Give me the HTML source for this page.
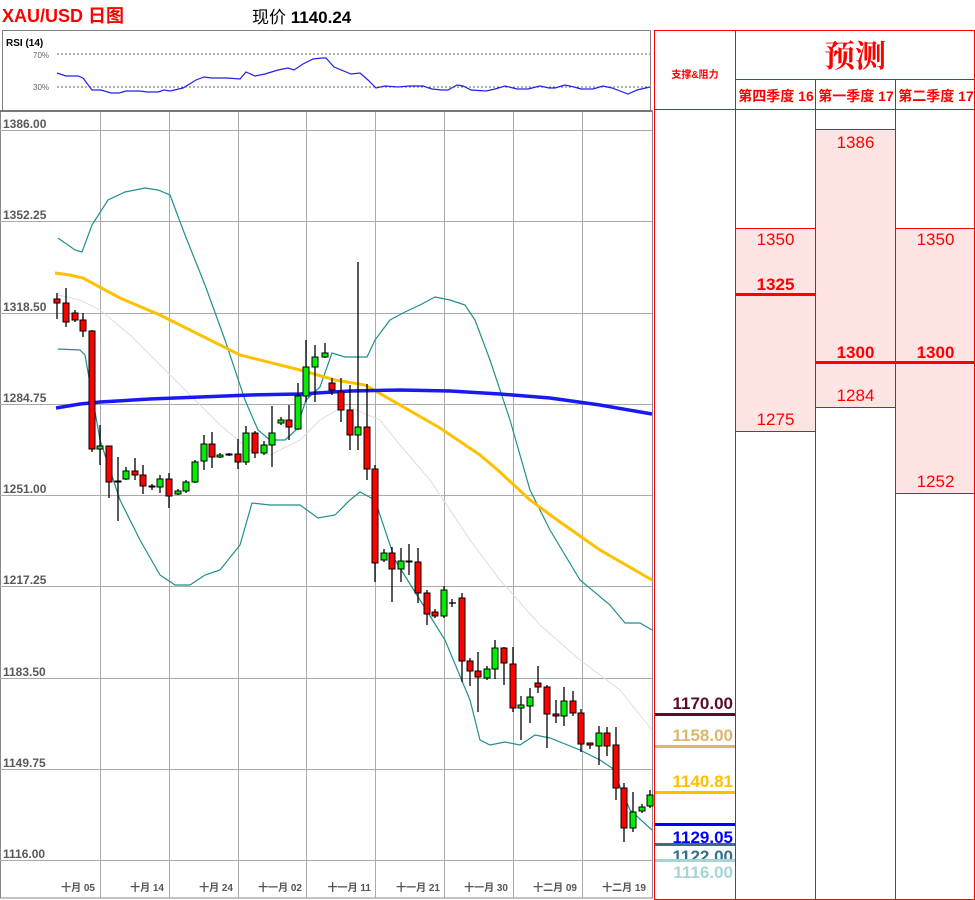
<!DOCTYPE html>
<html><head><meta charset="utf-8"><style>
body{margin:0;width:975px;height:900px;background:#fff;position:relative;overflow:hidden;font-family:"Liberation Sans","Noto Sans CJK SC",sans-serif}
.a{position:absolute}
.t{position:absolute;color:#f00;text-align:center;font-size:17px;line-height:18px}
.b{font-weight:bold}
.lv{position:absolute;left:655px;width:78px;text-align:right;font-weight:bold;font-size:17px;line-height:18px}
.ln{position:absolute;left:655px;width:80px;height:3px}
</style></head><body>
<div class="a" style="left:2px;top:2px;color:#f00;font-weight:bold;font-size:18px;">XAU/USD 日图</div>
<div class="a" style="left:252px;top:3px;color:#000;font-size:17px;">现价 <b>1140.24</b></div>

<svg class="a" style="left:0;top:0" width="654" height="900" font-family="Liberation Sans, sans-serif">
<rect x="2.5" y="30.5" width="648" height="80" fill="none" stroke="#808080"/>
<text x="6" y="46" font-size="10" font-weight="bold">RSI (14)</text>
<text x="33" y="58" font-size="8" fill="#666">70%</text>
<text x="33" y="90" font-size="8" fill="#666">30%</text>
<line x1="57" y1="54" x2="650" y2="54" stroke="#666" stroke-dasharray="2,2"/>
<line x1="57" y1="87" x2="650" y2="87" stroke="#666" stroke-dasharray="2,2"/>
<polyline fill="none" stroke="#2020f0" stroke-width="1.2" points="57,73 66,76 78,76 83,78 92,90 101,90 111,93 119,93 126,91 139,91 148,92 158,92 164,90 170,91 183,88 196,80 204,77 212,78 227,78 240,79 246,72 255,76 265,74 278,70 288,68 294,70 303,64 313,59 322,58 326,58 334,67 351,74 360,73 368,80 376,88 385,86 398,87 410,86 423,86 432,89 442,90 448,90 457,85 463,86 471,90 486,91 495,89 505,86 517,89 528,89 540,86 549,88 555,88 565,85 574,87 581,89 593,89 603,86 612,88 628,94 637,90 650,87"/>

<rect x="0.5" y="111" width="652" height="787" fill="none" stroke="#888"/>
<line x1="0" y1="111" x2="652" y2="111" stroke="#777" stroke-width="2"/>
<g stroke="#aaa" stroke-width="1">
<line x1="100.5" y1="112" x2="100.5" y2="898"/><line x1="169.5" y1="112" x2="169.5" y2="898"/><line x1="238.5" y1="112" x2="238.5" y2="898"/><line x1="306.5" y1="112" x2="306.5" y2="898"/><line x1="375.5" y1="112" x2="375.5" y2="898"/><line x1="444.5" y1="112" x2="444.5" y2="898"/><line x1="513.5" y1="112" x2="513.5" y2="898"/><line x1="582.5" y1="112" x2="582.5" y2="898"/>
<line x1="0" y1="130.5" x2="652" y2="130.5"/><line x1="0" y1="221.5" x2="652" y2="221.5"/><line x1="0" y1="313.5" x2="652" y2="313.5"/><line x1="0" y1="404.5" x2="652" y2="404.5"/><line x1="0" y1="495.5" x2="652" y2="495.5"/><line x1="0" y1="586.5" x2="652" y2="586.5"/><line x1="0" y1="678.5" x2="652" y2="678.5"/><line x1="0" y1="769.5" x2="652" y2="769.5"/><line x1="0" y1="860.5" x2="652" y2="860.5"/>
</g>
<g font-size="12" fill="#595959" font-weight="bold">
<text x="3" y="128">1386.00</text><text x="3" y="219">1352.25</text><text x="3" y="311">1318.50</text><text x="3" y="402">1284.75</text><text x="3" y="493">1251.00</text><text x="3" y="584">1217.25</text><text x="3" y="676">1183.50</text><text x="3" y="767">1149.75</text><text x="3" y="858">1116.00</text>
</g>
<g font-size="10" fill="#555" font-weight="bold" text-anchor="end" font-family="Liberation Sans, Noto Sans CJK SC, sans-serif">
<text x="95" y="891">十月 05</text><text x="164" y="891">十月 14</text><text x="233" y="891">十月 24</text><text x="302" y="891">十一月 02</text><text x="371" y="891">十一月 11</text><text x="440" y="891">十一月 21</text><text x="508" y="891">十一月 30</text><text x="577" y="891">十二月 09</text><text x="646" y="891">十二月 19</text>
</g>

<polyline fill="none" stroke="#ddd" stroke-width="1" points="58,295 80,300 100,310 130,335 160,365 190,395 220,425 250,450 270,455 300,440 320,420 345,405 380,420 400,445 430,480 470,540 500,580 540,625 580,660 620,690 652,730"/>
<polyline fill="none" stroke="#1f8f8f" stroke-width="1.2" points="58,238 75,250 82,252 92,225 108,200 125,192 145,188 158,190 170,195 185,235 205,285 225,340 245,400 258,430 270,440 285,440 296,430 306,400 320,387 332,353 345,357 360,357 367,357 375,340 390,320 405,312 420,305 435,297 450,300 465,305 475,320 490,360 510,420 530,490 550,530 580,580 610,605 625,623 640,623 652,630"/>
<polyline fill="none" stroke="#1f8f8f" stroke-width="1.2" points="58,349 80,350 85,355 100,440 120,500 140,540 160,575 175,585 190,585 205,575 220,570 240,545 252,503 270,505 300,505 318,518 335,515 350,500 360,492 375,500 395,560 420,600 445,640 470,700 480,740 490,745 505,742 520,745 535,735 550,738 580,750 600,760 612,768 630,810 652,830"/>
<polyline fill="none" stroke="#ffc000" stroke-width="3" points="55,273 70,275 83,278 120,298 160,315 200,335 240,355 300,370 335,380 365,385 400,405 440,428 480,455 500,472 530,500 560,522 600,550 652,580"/>
<polyline fill="none" stroke="#1a1af0" stroke-width="3.5" points="56,408 80,404 100,402 150,399 200,397 250,395 300,394 350,391 400,390 450,391 500,394 550,398 600,405 652,414"/>

<g stroke="#000" stroke-width="1.3">
<line x1="57" y1="293" x2="57" y2="319"/><line x1="66" y1="288" x2="66" y2="327"/><line x1="75" y1="310" x2="75" y2="322"/><line x1="83" y1="313" x2="83" y2="337"/><line x1="92" y1="330" x2="92" y2="452"/><line x1="100" y1="425" x2="100" y2="465"/><line x1="109" y1="446" x2="109" y2="498"/><line x1="118" y1="457" x2="118" y2="521"/><line x1="126" y1="467" x2="126" y2="480"/><line x1="135" y1="458" x2="135" y2="480"/><line x1="143" y1="465" x2="143" y2="494"/><line x1="152" y1="484" x2="152" y2="490"/><line x1="160" y1="475" x2="160" y2="493"/><line x1="169" y1="473" x2="169" y2="508"/><line x1="178" y1="489" x2="178" y2="495"/><line x1="186" y1="480" x2="186" y2="493"/><line x1="195" y1="460" x2="195" y2="483"/><line x1="204" y1="435" x2="204" y2="470"/><line x1="212" y1="432" x2="212" y2="468"/><line x1="220" y1="453" x2="220" y2="458"/><line x1="229" y1="453" x2="229" y2="456"/><line x1="238" y1="439" x2="238" y2="469"/><line x1="246" y1="426" x2="246" y2="465"/><line x1="255" y1="431" x2="255" y2="458"/><line x1="264" y1="441" x2="264" y2="455"/><line x1="272" y1="406" x2="272" y2="467"/><line x1="281" y1="417" x2="281" y2="425"/><line x1="289" y1="405" x2="289" y2="440"/><line x1="298" y1="383" x2="298" y2="430"/><line x1="306" y1="340" x2="306" y2="402"/><line x1="315" y1="345" x2="315" y2="402"/><line x1="325" y1="343" x2="325" y2="358"/><line x1="332" y1="378" x2="332" y2="395"/><line x1="341" y1="378" x2="341" y2="422"/><line x1="350" y1="385" x2="350" y2="450"/><line x1="358" y1="262" x2="358" y2="450"/><line x1="367" y1="384" x2="367" y2="480"/><line x1="375" y1="465" x2="375" y2="582"/><line x1="384" y1="549" x2="384" y2="562"/><line x1="392" y1="547" x2="392" y2="602"/><line x1="401" y1="548" x2="401" y2="582"/><line x1="409" y1="544" x2="409" y2="575"/><line x1="418" y1="548" x2="418" y2="603"/><line x1="427" y1="590" x2="427" y2="625"/><line x1="435" y1="609" x2="435" y2="618"/><line x1="444" y1="586" x2="444" y2="618"/><line x1="462" y1="593" x2="462" y2="682"/><line x1="470" y1="658" x2="470" y2="686"/><line x1="478" y1="652" x2="478" y2="712"/><line x1="487" y1="666" x2="487" y2="680"/><line x1="495" y1="640" x2="495" y2="679"/><line x1="504" y1="647" x2="504" y2="685"/><line x1="513" y1="647" x2="513" y2="712"/><line x1="521" y1="696" x2="521" y2="740"/><line x1="530" y1="688" x2="530" y2="723"/><line x1="538" y1="666" x2="538" y2="693"/><line x1="547" y1="685" x2="547" y2="748"/><line x1="556" y1="700" x2="556" y2="723"/><line x1="564" y1="687" x2="564" y2="726"/><line x1="573" y1="691" x2="573" y2="716"/><line x1="581" y1="709" x2="581" y2="752"/><line x1="590" y1="743" x2="590" y2="749"/><line x1="599" y1="726" x2="599" y2="765"/><line x1="607" y1="727" x2="607" y2="756"/><line x1="616" y1="727" x2="616" y2="800"/><line x1="624" y1="783" x2="624" y2="842"/><line x1="633" y1="792" x2="633" y2="832"/><line x1="642" y1="804" x2="642" y2="813"/><line x1="650" y1="790" x2="650" y2="808"/>
<line x1="449" y1="603" x2="456" y2="603"/><line x1="452" y1="599" x2="452" y2="607"/>
</g>
<g stroke="#000" stroke-width="1">
<rect x="54" y="299" width="6" height="4" fill="#f00"/><rect x="63" y="303" width="6" height="19" fill="#f00"/><rect x="72" y="313" width="6" height="7" fill="#f00"/><rect x="80" y="320" width="6" height="11" fill="#f00"/><rect x="89" y="331" width="6" height="118" fill="#f00"/><rect x="97" y="446" width="6" height="3" fill="#0e0"/><rect x="106" y="446" width="6" height="36" fill="#f00"/><rect x="115" y="481" width="6" height="1" fill="#000"/><rect x="123" y="471" width="6" height="8" fill="#0e0"/><rect x="132" y="471" width="6" height="4" fill="#f00"/><rect x="140" y="475" width="6" height="11" fill="#f00"/><rect x="149" y="486" width="6" height="1" fill="#000"/><rect x="157" y="479" width="6" height="8" fill="#0e0"/><rect x="166" y="479" width="6" height="17" fill="#f00"/><rect x="175" y="491" width="6" height="3" fill="#0e0"/><rect x="183" y="482" width="6" height="9" fill="#0e0"/><rect x="192" y="462" width="6" height="20" fill="#0e0"/><rect x="201" y="444" width="6" height="17" fill="#0e0"/><rect x="209" y="444" width="6" height="13" fill="#f00"/><rect x="217" y="455" width="6" height="2" fill="#0e0"/><rect x="226" y="454" width="6" height="1" fill="#000"/><rect x="235" y="454" width="6" height="8" fill="#f00"/><rect x="243" y="433" width="6" height="29" fill="#0e0"/><rect x="252" y="433" width="6" height="20" fill="#f00"/><rect x="261" y="445" width="6" height="8" fill="#0e0"/><rect x="269" y="433" width="6" height="12" fill="#0e0"/><rect x="278" y="420" width="6" height="3" fill="#0e0"/><rect x="286" y="420" width="6" height="7" fill="#f00"/><rect x="295" y="396" width="6" height="33" fill="#0e0"/><rect x="303" y="367" width="6" height="29" fill="#0e0"/><rect x="312" y="357" width="6" height="10" fill="#0e0"/><rect x="322" y="353" width="6" height="4" fill="#0e0"/><rect x="329" y="383" width="6" height="7" fill="#f00"/><rect x="338" y="392" width="6" height="18" fill="#f00"/><rect x="347" y="410" width="6" height="25" fill="#f00"/><rect x="355" y="427" width="6" height="8" fill="#0e0"/><rect x="364" y="427" width="6" height="42" fill="#f00"/><rect x="372" y="469" width="6" height="94" fill="#f00"/><rect x="381" y="553" width="6" height="7" fill="#0e0"/><rect x="389" y="553" width="6" height="16" fill="#f00"/><rect x="398" y="561" width="6" height="8" fill="#0e0"/><rect x="406" y="561" width="6" height="1" fill="#000"/><rect x="415" y="562" width="6" height="31" fill="#f00"/><rect x="424" y="593" width="6" height="21" fill="#f00"/><rect x="432" y="612" width="6" height="4" fill="#f00"/><rect x="441" y="590" width="6" height="26" fill="#0e0"/><rect x="459" y="598" width="6" height="63" fill="#f00"/><rect x="467" y="661" width="6" height="10" fill="#f00"/><rect x="475" y="671" width="6" height="6" fill="#f00"/><rect x="484" y="669" width="6" height="9" fill="#0e0"/><rect x="492" y="648" width="6" height="21" fill="#0e0"/><rect x="501" y="648" width="6" height="15" fill="#f00"/><rect x="510" y="664" width="6" height="44" fill="#f00"/><rect x="518" y="705" width="6" height="3" fill="#0e0"/><rect x="527" y="697" width="6" height="9" fill="#0e0"/><rect x="535" y="683" width="6" height="4" fill="#f00"/><rect x="544" y="687" width="6" height="27" fill="#f00"/><rect x="553" y="714" width="6" height="2" fill="#f00"/><rect x="561" y="701" width="6" height="15" fill="#0e0"/><rect x="570" y="701" width="6" height="12" fill="#f00"/><rect x="578" y="713" width="6" height="31" fill="#f00"/><rect x="587" y="743" width="6" height="2" fill="#f00"/><rect x="596" y="733" width="6" height="13" fill="#0e0"/><rect x="604" y="733" width="6" height="13" fill="#f00"/><rect x="613" y="745" width="6" height="43" fill="#f00"/><rect x="621" y="788" width="6" height="40" fill="#f00"/><rect x="630" y="812" width="6" height="16" fill="#0e0"/><rect x="639" y="807" width="6" height="4" fill="#0e0"/><rect x="647" y="795" width="6" height="11" fill="#0e0"/>
</g>
</svg>

<!-- table -->
<div class="a" style="left:654px;top:30px;width:319px;height:868px;border:1px solid #f00;"></div>
<div class="a" style="left:735px;top:30px;width:1px;height:870px;background:#f00"></div>
<div class="a" style="left:735px;top:79px;width:240px;height:1px;background:#f00"></div>
<div class="a" style="left:654px;top:109px;width:321px;height:1px;background:#f00"></div>
<div class="a" style="left:815px;top:79px;width:1px;height:821px;background:#f00"></div>
<div class="a" style="left:895px;top:79px;width:1px;height:821px;background:#f00"></div>
<div class="t b" style="left:655px;top:67px;width:80px;font-size:10px;">支撑&amp;阻力</div>
<div class="t b" style="left:736px;top:36px;width:238px;font-size:31px;line-height:36px;font-family:'Noto Serif CJK SC',serif;">预测</div>
<div class="t b" style="left:736px;top:87px;width:80px;font-size:14px;white-space:nowrap">第四季度 16</div>
<div class="t b" style="left:816px;top:87px;width:80px;font-size:14px;white-space:nowrap">第一季度 17</div>
<div class="t b" style="left:896px;top:87px;width:80px;font-size:14px;white-space:nowrap">第二季度 17</div>

<div class="a" style="left:736px;top:228px;width:79px;height:202px;background:#ffe4e4;border-top:1px solid #f00;border-bottom:1px solid #f00"></div>
<div class="a" style="left:816px;top:129px;width:79px;height:277px;background:#ffe4e4;border-top:1px solid #f00;border-bottom:1px solid #f00"></div>
<div class="a" style="left:896px;top:228px;width:78px;height:264px;background:#ffe4e4;border-top:1px solid #f00;border-bottom:1px solid #f00"></div>
<div class="a" style="left:736px;top:293px;width:79px;height:3px;background:#f00"></div>
<div class="a" style="left:816px;top:361px;width:159px;height:3px;background:#f00"></div>
<div class="t" style="left:736px;top:231px;width:79px">1350</div>
<div class="t b" style="left:736px;top:276px;width:79px">1325</div>
<div class="t" style="left:736px;top:411px;width:79px">1275</div>
<div class="t" style="left:816px;top:134px;width:79px">1386</div>
<div class="t b" style="left:816px;top:344px;width:79px">1300</div>
<div class="t" style="left:816px;top:387px;width:79px">1284</div>
<div class="t" style="left:896px;top:231px;width:79px">1350</div>
<div class="t b" style="left:896px;top:344px;width:79px">1300</div>
<div class="t" style="left:896px;top:473px;width:79px">1252</div>

<div class="lv" style="top:695px;color:#5a0a2a">1170.00</div><div class="ln" style="top:713px;background:#5a0a2a"></div>
<div class="lv" style="top:727px;color:#d9b86c">1158.00</div><div class="ln" style="top:745px;background:#d9b86c"></div>
<div class="lv" style="top:773px;color:#ffc000">1140.81</div><div class="ln" style="top:791px;background:#ffc000"></div>
<div class="ln" style="top:823px;background:#0000ff"></div><div class="lv" style="top:829px;color:#0000ff">1129.05</div>
<div class="ln" style="top:843px;background:#31708f"></div><div class="lv" style="top:848px;color:#31708f">1122.00</div>
<div class="ln" style="top:859px;background:#a8d4d4"></div><div class="lv" style="top:864px;color:#a8d4d4">1116.00</div>
</body></html>
